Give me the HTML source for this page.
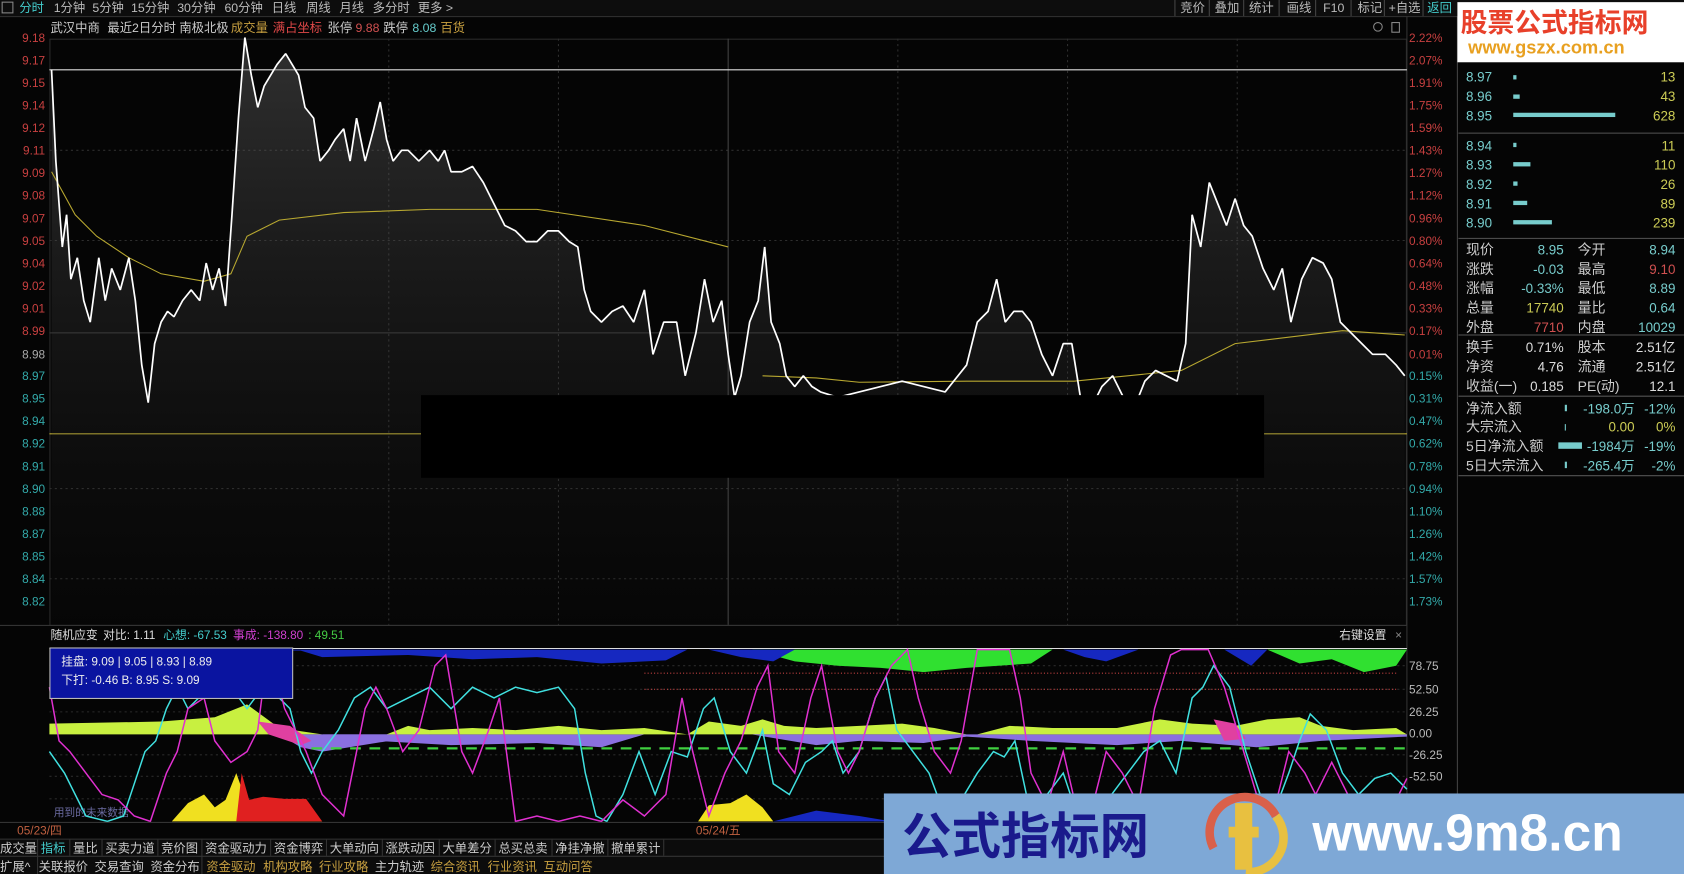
<!DOCTYPE html>
<html><head><meta charset="utf-8"><style>
html,body{margin:0;padding:0;background:#000;width:1684px;height:874px;overflow:hidden}
svg{display:block}
text{font-family:"Liberation Sans","Noto Sans CJK SC",sans-serif}
</style></head><body>
<svg width="1684" height="874" viewBox="0 0 1568 814" preserveAspectRatio="none" xmlns="http://www.w3.org/2000/svg">
<rect width="1568" height="814" fill="#050505"/>
<!-- top bar -->
<rect x="0" y="0" width="1568" height="15" fill="#0d0d0d"/>
<line x1="0" y1="15.5" x2="1568" y2="15.5" stroke="#333"/>
<rect x="2" y="2" width="10" height="10" fill="none" stroke="#888"/>
<g font-size="11.5" fill="#bbb">
<text x="18" y="11" fill="#4cc">分时</text><text x="50" y="11">1分钟</text><text x="86" y="11">5分钟</text><text x="122" y="11">15分钟</text><text x="165" y="11">30分钟</text><text x="209" y="11">60分钟</text><text x="253" y="11">日线</text><text x="285" y="11">周线</text><text x="316" y="11">月线</text><text x="347" y="11">多分时</text><text x="389" y="11">更多 &gt;</text>
<text x="1099" y="11">竞价</text><text x="1131" y="11">叠加</text><text x="1163" y="11">统计</text><text x="1198" y="11">画线</text><text x="1232" y="11">F10</text><text x="1264" y="11">标记</text><text x="1293" y="11">+自选</text><text x="1329" y="11" fill="#4cc">返回</text>
</g>
<g stroke="#444"><line x1="1094" y1="0" x2="1094" y2="15"/><line x1="1126" y1="0" x2="1126" y2="15"/><line x1="1158" y1="0" x2="1158" y2="15"/><line x1="1191" y1="0" x2="1191" y2="15"/><line x1="1225" y1="0" x2="1225" y2="15"/><line x1="1258" y1="0" x2="1258" y2="15"/><line x1="1289" y1="0" x2="1289" y2="15"/><line x1="1325" y1="0" x2="1325" y2="15"/></g>
<!-- title -->
<g font-size="11.5">
<text x="47" y="30" fill="#ccc">武汉中商</text><text x="100" y="30" fill="#ccc">最近2日分时 南极北极</text><text x="215" y="30" fill="#c8a040">成交量</text><text x="254" y="30" fill="#e04848">满占坐标</text><text x="305" y="30" fill="#ccc">张停</text><text x="331" y="30" fill="#d05050">9.88</text><text x="357" y="30" fill="#ccc">跌停</text><text x="384" y="30" fill="#6cc">8.08</text><text x="410" y="30" fill="#c8a040">百货</text>
</g>
<circle cx="1283" cy="25" r="4" fill="none" stroke="#888"/><rect x="1296" y="21" width="7" height="9" fill="none" stroke="#888"/>
<!-- main chart frame -->
<rect x="46.5" y="36.5" width="1263" height="546" fill="none" stroke="#2a2a2a"/>
<line x1="1310" y1="15" x2="1310" y2="814" stroke="#333"/>
<line x1="1357" y1="15" x2="1357" y2="814" stroke="#444"/>
<g stroke="#2e2e2e" stroke-dasharray="2,3">
<line x1="362" y1="36" x2="362" y2="582"/><line x1="994" y1="36" x2="994" y2="582"/><line x1="1152" y1="36" x2="1152" y2="582"/><line x1="520" y1="36" x2="520" y2="582"/><line x1="836" y1="36" x2="836" y2="582"/>
<line x1="46" y1="140" x2="1310" y2="140"/><line x1="46" y1="224" x2="1310" y2="224"/><line x1="46" y1="455" x2="1310" y2="455"/><line x1="46" y1="539" x2="1310" y2="539"/>
</g>
<line x1="678" y1="36" x2="678" y2="582" stroke="#444"/>
<line x1="46" y1="310" x2="1310" y2="310" stroke="#3a3a3a"/>
<line x1="46" y1="65" x2="1310" y2="65" stroke="#ddd"/>
<line x1="46" y1="404" x2="1310" y2="404" stroke="#b8a830"/>
<!-- axis labels -->
<g font-size="11" fill="#c84040" text-anchor="end">
<text x="42" y="39">9.18</text><text x="42" y="60">9.17</text><text x="42" y="81">9.15</text><text x="42" y="102">9.14</text><text x="42" y="123">9.12</text><text x="42" y="144">9.11</text><text x="42" y="165">9.09</text><text x="42" y="186">9.08</text><text x="42" y="207">9.07</text><text x="42" y="228">9.05</text><text x="42" y="249">9.04</text><text x="42" y="270">9.02</text><text x="42" y="291">9.01</text><text x="42" y="312">8.99</text>
</g>
<g font-size="11" fill="#3aa" text-anchor="end">
<text x="42" y="334" fill="#aaa">8.98</text><text x="42" y="354">8.97</text><text x="42" y="375">8.95</text><text x="42" y="396">8.94</text><text x="42" y="417">8.92</text><text x="42" y="438">8.91</text><text x="42" y="459">8.90</text><text x="42" y="480">8.88</text><text x="42" y="501">8.87</text><text x="42" y="522">8.85</text><text x="42" y="543">8.84</text><text x="42" y="564">8.82</text>
</g>
<g font-size="11" fill="#c84040">
<text x="1312" y="39">2.22%</text><text x="1312" y="60">2.07%</text><text x="1312" y="81">1.91%</text><text x="1312" y="102">1.75%</text><text x="1312" y="123">1.59%</text><text x="1312" y="144">1.43%</text><text x="1312" y="165">1.27%</text><text x="1312" y="186">1.12%</text><text x="1312" y="207">0.96%</text><text x="1312" y="228">0.80%</text><text x="1312" y="249">0.64%</text><text x="1312" y="270">0.48%</text><text x="1312" y="291">0.33%</text><text x="1312" y="312">0.17%</text><text x="1312" y="334">0.01%</text>
</g>
<g font-size="11" fill="#3aa">
<text x="1312" y="354">0.15%</text><text x="1312" y="375">0.31%</text><text x="1312" y="396">0.47%</text><text x="1312" y="417">0.62%</text><text x="1312" y="438">0.78%</text><text x="1312" y="459">0.94%</text><text x="1312" y="480">1.10%</text><text x="1312" y="501">1.26%</text><text x="1312" y="522">1.42%</text><text x="1312" y="543">1.57%</text><text x="1312" y="564">1.73%</text>
</g>
<defs><linearGradient id="gf" x1="0" y1="0" x2="0" y2="1"><stop offset="0" stop-color="#666" stop-opacity=".45"/><stop offset="1" stop-color="#222" stop-opacity=".05"/></linearGradient></defs>
<polygon fill="url(#gf)" points="48,65 52,150 58,230 62,200 66,260 72,240 78,280 84,300 92,240 98,280 104,250 112,270 120,240 126,280 132,340 138,375 144,320 150,300 156,290 162,295 170,280 178,270 186,280 192,245 198,270 204,250 210,285 216,200 222,110 228,35 234,70 240,100 246,80 252,70 258,60 266,50 272,60 278,70 284,100 292,110 298,150 306,140 312,130 320,120 326,150 332,110 340,150 348,120 354,95 360,130 366,150 374,140 380,140 390,150 400,140 408,150 414,140 420,160 430,160 440,155 450,170 460,190 470,210 480,215 490,225 500,225 510,215 520,215 530,225 538,230 544,270 550,290 560,300 570,290 580,285 590,300 600,270 608,330 618,300 630,300 638,350 648,310 656,260 664,300 672,280 678,330 684,370 690,350 698,300 706,280 712,230 718,300 726,320 732,350 740,360 748,350 756,360 764,365 780,370 800,365 820,360 840,355 860,360 880,365 900,340 910,300 920,290 928,260 936,300 944,290 952,290 960,300 970,330 980,350 990,320 998,320 1006,370 1016,380 1026,360 1036,350 1046,370 1056,380 1066,355 1076,345 1086,350 1096,355 1104,320 1110,200 1118,230 1126,170 1134,190 1142,210 1150,185 1158,210 1166,220 1176,250 1186,270 1194,250 1202,300 1212,260 1222,240 1232,245 1240,260 1248,300 1258,310 1268,320 1278,330 1290,330 1300,340 1308,350 1308,582 48,582"/>
<polyline fill="none" stroke="#b8a830" stroke-width="1" points="48,160 70,200 90,220 120,240 150,255 190,262 215,255 230,220 260,205 320,198 400,195 500,195 600,210 678,230"/>
<polyline fill="none" stroke="#b8a830" stroke-width="1" points="710,350 760,352 800,356 900,355 1000,355 1100,345 1150,320 1250,308 1308,312"/>
<polyline fill="none" stroke="#fff" stroke-width="1.6" stroke-linejoin="bevel" points="48,65 52,150 58,230 62,200 66,260 72,240 78,280 84,300 92,240 98,280 104,250 112,270 120,240 126,280 132,340 138,375 144,320 150,300 156,290 162,295 170,280 178,270 186,280 192,245 198,270 204,250 210,285 216,200 222,110 228,35 234,70 240,100 246,80 252,70 258,60 266,50 272,60 278,70 284,100 292,110 298,150 306,140 312,130 320,120 326,150 332,110 340,150 348,120 354,95 360,130 366,150 374,140 380,140 390,150 400,140 408,150 414,140 420,160 430,160 440,155 450,170 460,190 470,210 480,215 490,225 500,225 510,215 520,215 530,225 538,230 544,270 550,290 560,300 570,290 580,285 590,300 600,270 608,330 618,300 630,300 638,350 648,310 656,260 664,300 672,280 678,330 684,370 690,350 698,300 706,280 712,230 718,300 726,320 732,350 740,360 748,350 756,360 764,365 780,370 800,365 820,360 840,355 860,360 880,365 900,340 910,300 920,290 928,260 936,300 944,290 952,290 960,300 970,330 980,350 990,320 998,320 1006,370 1016,380 1026,360 1036,350 1046,370 1056,380 1066,355 1076,345 1086,350 1096,355 1104,320 1110,200 1118,230 1126,170 1134,190 1142,210 1150,185 1158,210 1166,220 1176,250 1186,270 1194,250 1202,300 1212,260 1222,240 1232,245 1240,260 1248,300 1258,310 1268,320 1278,330 1290,330 1300,340 1308,350"/>
<rect x="392" y="368" width="785" height="77" fill="#000"/>
<!-- lower panel -->
<line x1="0" y1="582.5" x2="1310" y2="582.5" stroke="#333"/>
<g font-size="11">
<text x="47" y="595" fill="#ddd">随机应变</text><text x="96" y="595" fill="#ddd">对比: 1.11</text><text x="152" y="595" fill="#4cc">心想: -67.53</text><text x="217" y="595" fill="#d040d0">事成: -138.80</text><text x="287" y="595" fill="#4c4">: 49.51</text>
<text x="1247" y="595" fill="#ddd">右键设置</text><text x="1299" y="595" fill="#888">×</text>
</g>
<line x1="46" y1="604" x2="1310" y2="604" stroke="#ddd"/>
<g font-size="11" fill="#bbb">
<text x="1312" y="624">78.75</text><text x="1312" y="646">52.50</text><text x="1312" y="667">26.25</text><text x="1312" y="687">0.00</text><text x="1312" y="707">-26.25</text><text x="1312" y="727">-52.50</text>
</g>
<g stroke="#2a2a2a" stroke-dasharray="2,3"><line x1="46" y1="620" x2="1310" y2="620"/><line x1="46" y1="642" x2="1310" y2="642"/><line x1="46" y1="663" x2="1310" y2="663"/><line x1="46" y1="703" x2="1310" y2="703"/><line x1="46" y1="723" x2="1310" y2="723"/><line x1="46" y1="744" x2="1310" y2="744"/></g>
<!-- top strip fills -->
<polygon fill="#1628c0" points="46,605 640,605 620,615 560,618 500,612 440,614 380,610 300,612 280,606"/>
<polygon fill="#30e030" points="700,605 980,605 960,618 900,622 860,626 820,622 780,620 740,616"/>
<polygon fill="#1628c0" points="660,605 740,605 720,616 690,612"/>
<polygon fill="#30e030" points="1180,605 1310,605 1300,620 1270,626 1240,614 1210,618"/>
<polygon fill="#1628c0" points="990,605 1060,605 1030,616 1010,612"/>
<polygon fill="#1628c0" points="1140,605 1180,605 1165,620"/>
<!-- mid band -->
<polygon fill="#c8f040" points="46,674 150,672 200,668 230,656 260,678 300,684 46,684"/>
<polygon fill="#8a70e0" points="260,684 320,684 400,684 300,700 280,696"/>
<polygon fill="#e040a0" points="240,672 270,676 290,690 280,694 250,684"/>
<polygon fill="#8a70e0" points="300,684 600,684 560,696 500,692 420,694 350,690"/>
<polygon fill="#c8f040" points="360,684 380,676 400,680 440,678 480,680 520,676 560,680 600,678 640,684"/>
<polygon fill="#c8f040" points="640,684 660,672 690,676 710,670 730,676 760,678 800,676 840,674 870,678 900,684"/>
<polygon fill="#8a70e0" points="700,684 760,694 800,690 860,692 900,686 960,690 1040,694 1100,690 1170,696 1230,690 1310,686 1310,684"/>
<polygon fill="#c8f040" points="910,684 940,676 980,678 1040,678 1080,670 1110,674 1150,676 1180,670 1210,668 1230,676 1260,680 1300,678 1310,684"/>
<polygon fill="#e040a0" points="1130,670 1150,674 1160,688 1140,690"/>
<g stroke="#40d040" stroke-width="2" stroke-dasharray="10,8"><line x1="290" y1="697" x2="1310" y2="697"/></g>
<g stroke="#c04040" stroke-width="1" stroke-dasharray="1,2"><line x1="600" y1="642" x2="1300" y2="642"/><line x1="600" y1="627" x2="1300" y2="627"/></g>
<!-- bottom fills -->
<polygon fill="#f0e020" points="160,765 175,748 190,740 200,752 210,745 220,720 230,748 245,745 260,748 280,752 300,765"/>
<polygon fill="#e02020" points="220,765 225,720 232,745 245,742 265,744 285,744 300,765"/>
<polygon fill="#f0e020" points="650,765 660,750 680,748 695,740 710,752 720,765"/>
<polygon fill="#1628c0" points="720,765 760,755 800,760 830,765"/>
<polygon fill="#f0e020" points="1200,765 1210,750 1225,755 1240,740 1255,750 1270,765"/>
<text x="50" y="760" font-size="10" fill="#6a6aa0">用到的未来数据</text>
<polyline fill="none" stroke="#40e0e0" stroke-width="1.4" points="46,700 60,720 80,760 100,765 115,760 125,730 135,700 145,690 155,660 165,640 175,660 185,650 200,620 215,640 230,660 245,640 260,650 270,660 280,700 290,720 300,700 315,680 330,650 345,640 360,660 380,650 400,640 420,660 440,640 460,650 480,640 500,645 520,640 535,660 545,720 555,760 565,765 580,740 595,700 610,740 625,700 640,705 655,660 665,650 680,700 695,720 710,680 720,730 735,740 750,710 765,700 775,690 785,720 800,700 815,650 825,630 835,680 850,700 865,720 880,760 895,745 910,720 925,700 935,705 945,690 960,760 975,740 990,720 1005,765 1020,760 1035,740 1050,720 1065,700 1080,690 1095,720 1110,650 1120,640 1130,620 1145,640 1160,700 1175,745 1185,760 1200,720 1210,690 1220,665 1235,680 1250,720 1265,740 1280,725 1295,720 1310,735"/>
<polyline fill="none" stroke="#e030d0" stroke-width="1.4" points="46,640 55,690 65,700 80,720 95,740 110,745 125,760 140,765 155,720 165,700 175,660 190,650 200,690 215,710 230,700 240,680 245,640 255,620 265,660 275,680 285,700 300,740 320,760 340,660 350,640 360,660 375,700 390,680 405,620 415,610 430,700 440,720 455,680 465,650 480,765 500,760 520,765 540,760 560,765 580,745 600,760 620,740 635,650 645,700 660,760 675,720 690,690 705,640 715,620 725,700 740,720 755,650 765,620 780,700 790,720 800,700 815,650 830,620 845,605 855,650 870,700 885,720 895,690 910,605 940,605 950,650 960,720 975,750 990,700 1005,765 1020,740 1030,700 1045,720 1060,750 1075,660 1090,610 1100,605 1125,605 1140,640 1155,690 1170,740 1185,760 1200,700 1215,720 1225,740 1240,710 1255,740 1270,760 1290,765 1310,725"/>
<!-- info box -->
<rect x="46.5" y="603.5" width="226" height="47" fill="#0a14a0" stroke="#bbb"/>
<text x="57" y="620" font-size="11" fill="#eee">挂盘: 9.09 | 9.05 | 8.93 | 8.89</text>
<text x="57" y="637" font-size="11" fill="#eee">下打: -0.46  B: 8.95  S: 9.09</text>
<line x1="0" y1="766" x2="1310" y2="766" stroke="#333"/>
<text x="16" y="777" font-size="11" fill="#c06040">05/23/四</text>
<text x="648" y="777" font-size="11" fill="#c06040">05/24/五</text>
<!-- tabs -->
<rect x="0" y="781" width="830" height="33" fill="#0c0c0c"/>
<line x1="0" y1="781.5" x2="830" y2="781.5" stroke="#333"/><line x1="0" y1="797.5" x2="830" y2="797.5" stroke="#333"/>
<g font-size="11.5" fill="#ccc">
<text x="0" y="794">成交量</text><text x="38" y="794" fill="#4cc">指标</text><text x="68" y="794">量比</text><text x="98" y="794">买卖力道</text><text x="150" y="794">竞价图</text><text x="191" y="794">资金驱动力</text><text x="255" y="794">资金博弈</text><text x="307" y="794">大单动向</text><text x="359" y="794">涨跌动因</text><text x="412" y="794">大单差分</text><text x="464" y="794">总买总卖</text><text x="517" y="794">净挂净撤</text><text x="569" y="794">撤单累计</text>
<text x="0" y="811">扩展^</text><text x="36" y="811">关联报价</text><text x="88" y="811">交易查询</text><text x="140" y="811">资金分布</text><text x="192" y="811" fill="#c8a040">资金驱动</text><text x="245" y="811" fill="#c8a040">机构攻略</text><text x="297" y="811" fill="#c8a040">行业攻略</text><text x="349" y="811">主力轨迹</text><text x="401" y="811" fill="#c8a040">综合资讯</text><text x="454" y="811" fill="#c8a040">行业资讯</text><text x="506" y="811" fill="#c8a040">互动问答</text>
</g>
<g stroke="#333"><line x1="35" y1="782" x2="35" y2="814"/><line x1="65" y1="782" x2="65" y2="797"/><line x1="95" y1="782" x2="95" y2="797"/><line x1="147" y1="782" x2="147" y2="797"/><line x1="188" y1="782" x2="188" y2="814"/><line x1="252" y1="782" x2="252" y2="797"/><line x1="304" y1="782" x2="304" y2="797"/><line x1="356" y1="782" x2="356" y2="797"/><line x1="409" y1="782" x2="409" y2="797"/><line x1="461" y1="782" x2="461" y2="797"/><line x1="514" y1="782" x2="514" y2="797"/><line x1="566" y1="782" x2="566" y2="797"/><line x1="618" y1="782" x2="618" y2="797"/></g>
<!-- right panel logo -->
<rect x="1357" y="2" width="211" height="56" fill="#fff"/>
<text x="1360" y="30" font-size="25" font-weight="bold" fill="#e8402a" font-family="Liberation Sans,Noto Sans CJK SC,sans-serif">股票公式指标网</text>
<text x="1367" y="50" font-size="17" font-weight="bold" fill="#e8a020">www.gszx.com.cn</text>
<!-- order book -->
<g font-size="12.5" fill="#7cc">
<text x="1365" y="76">8.97</text><text x="1365" y="94">8.96</text><text x="1365" y="112">8.95</text>
<text x="1365" y="140">8.94</text><text x="1365" y="158">8.93</text><text x="1365" y="176">8.92</text><text x="1365" y="194">8.91</text><text x="1365" y="212">8.90</text>
</g>
<g fill="#7cc"><rect x="1409" y="70" width="3" height="4"/><rect x="1409" y="88" width="6" height="4"/><rect x="1409" y="105" width="95" height="4"/><rect x="1409" y="133" width="3" height="4"/><rect x="1409" y="151" width="16" height="4"/><rect x="1409" y="169" width="4" height="4"/><rect x="1409" y="187" width="13" height="4"/><rect x="1409" y="205" width="36" height="4"/></g>
<g font-size="12.5" fill="#cc5" text-anchor="end">
<text x="1560" y="76">13</text><text x="1560" y="94">43</text><text x="1560" y="112">628</text><text x="1560" y="140">11</text><text x="1560" y="158">110</text><text x="1560" y="176">26</text><text x="1560" y="194">89</text><text x="1560" y="212">239</text>
</g>
<g stroke="#555"><line x1="1358" y1="124" x2="1568" y2="124"/><line x1="1358" y1="222" x2="1568" y2="222"/><line x1="1358" y1="312" x2="1568" y2="312"/><line x1="1358" y1="369" x2="1568" y2="369"/><line x1="1358" y1="443" x2="1568" y2="443"/></g>
<g font-size="13" fill="#ccc">
<text x="1365" y="237">现价</text><text x="1365" y="255">涨跌</text><text x="1365" y="273">涨幅</text><text x="1365" y="291">总量</text><text x="1365" y="309">外盘</text>
<text x="1469" y="237">今开</text><text x="1469" y="255">最高</text><text x="1469" y="273">最低</text><text x="1469" y="291">量比</text><text x="1469" y="309">内盘</text>
<text x="1365" y="328">换手</text><text x="1365" y="346">净资</text><text x="1365" y="364">收益(一)</text>
<text x="1469" y="328">股本</text><text x="1469" y="346">流通</text><text x="1469" y="364">PE(动)</text>
<text x="1365" y="385">净流入额</text><text x="1365" y="402">大宗流入</text><text x="1365" y="420">5日净流入额</text><text x="1365" y="438">5日大宗流入</text>
</g>
<g font-size="12.5" text-anchor="end">
<text x="1456" y="237" fill="#7cc">8.95</text><text x="1456" y="255" fill="#7cc">-0.03</text><text x="1456" y="273" fill="#7cc">-0.33%</text><text x="1456" y="291" fill="#cc5">17740</text><text x="1456" y="309" fill="#d05050">7710</text>
<text x="1560" y="237" fill="#7cc">8.94</text><text x="1560" y="255" fill="#d05050">9.10</text><text x="1560" y="273" fill="#7cc">8.89</text><text x="1560" y="291" fill="#7cc">0.64</text><text x="1560" y="309" fill="#7cc">10029</text>
<text x="1456" y="328" fill="#ddd">0.71%</text><text x="1456" y="346" fill="#ddd">4.76</text><text x="1456" y="364" fill="#ddd">0.185</text>
<text x="1560" y="328" fill="#ddd">2.51亿</text><text x="1560" y="346" fill="#ddd">2.51亿</text><text x="1560" y="364" fill="#ddd">12.1</text>
<text x="1522" y="385" fill="#7cc">-198.0万</text><text x="1522" y="402" fill="#cc5">0.00</text><text x="1522" y="420" fill="#7cc">-1984万</text><text x="1522" y="438" fill="#7cc">-265.4万</text>
<text x="1560" y="385" fill="#7cc">-12%</text><text x="1560" y="402" fill="#cc5">0%</text><text x="1560" y="420" fill="#7cc">-19%</text><text x="1560" y="438" fill="#7cc">-2%</text>
</g>
<g fill="#7cc"><rect x="1457" y="377" width="2" height="6"/><rect x="1457" y="395" width="1" height="6"/><rect x="1451" y="412" width="22" height="6"/><rect x="1457" y="430" width="2" height="6"/></g>
<!-- bottom banner -->
<rect x="823" y="739" width="745" height="75" fill="#7ea8d6"/>
<text x="840" y="795" font-size="46" font-weight="bold" fill="#1a1a8c" font-family="Liberation Sans,Noto Sans CJK SC,sans-serif">公式指标网</text>
<path d="M1130,790 A32,32 0 0 1 1188,760" fill="none" stroke="#d9604a" stroke-width="8"/>
<path d="M1188,760 A32,32 0 0 1 1160,812" fill="none" stroke="#e8c040" stroke-width="8"/>
<rect x="1150" y="748" width="16" height="62" fill="#e8c040"/>
<rect x="1144" y="770" width="28" height="10" fill="#e8c040"/>
<text x="1222" y="792" font-size="48" font-weight="bold" fill="#fff" font-family="Liberation Serif,serif">www.9m8.cn</text>
</svg>
</body></html>
